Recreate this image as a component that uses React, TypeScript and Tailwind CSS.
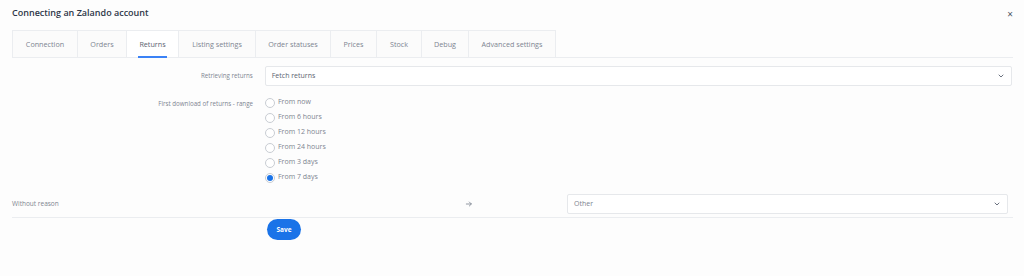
import React from 'react';

const tabs = [
  { label: 'Connection', w: 65 },
  { label: 'Orders', w: 49 },
  { label: 'Returns', w: 52, active: true },
  { label: 'Listing settings', w: 77 },
  { label: 'Order statuses', w: 75 },
  { label: 'Prices', w: 46 },
  { label: 'Stock', w: 45 },
  { label: 'Debug', w: 47 },
  { label: 'Advanced settings', w: 88 },
];

const ranges = ['From now', 'From 6 hours', 'From 12 hours', 'From 24 hours', 'From 3 days', 'From 7 days'];

const Chevron = () => (
  <svg width="8" height="8" viewBox="0 0 24 24" fill="none" stroke="#6b7280" strokeWidth={3} strokeLinecap="round" strokeLinejoin="round">
    <path d="M6 9l6 6 6-6" />
  </svg>
);

const App: React.FC = () => {
  return (
    <div className="w-[1024px] h-[276px] bg-[#fdfdfd] px-3 text-[#7d8591]" style={{ fontFamily: '"Open Sans", sans-serif' }}>
      {/* Header */}
      <div className="flex items-center justify-between h-[25px] pt-[1px]">
        <h1 className="text-[9px] font-semibold text-[#2d3748]">Connecting an Zalando account</h1>
        <span className="text-[10px] text-[#4b5563] mr-[-1px] mt-[2px]">×</span>
      </div>

      {/* Tabs */}
      <div className="mt-[5px] flex border-b border-[#ebedf0] w-[1001px]">
        {tabs.map((t) => (
          <div
            key={t.label}
            style={{ width: t.w }}
            className={`h-[27px] flex items-center justify-center border-l border-t border-[#ebedf0] last:border-r text-[7.2px] ${t.active ? 'bg-white text-[#5b6370]' : 'bg-[#fbfbfb] text-[#7d8591]'}`}
          >
            <span className="relative">
              {t.label}
              {t.active && <span className="absolute left-[-1px] right-[-1px] top-[17px] h-[2px] bg-[#3b82f6]" />}
            </span>
          </div>
        ))}
      </div>

      {/* Retrieving returns */}
      <div className="flex items-center mt-[8px]">
        <div className="w-[241px] text-right text-[6.2px]">Retrieving returns</div>
        <div className="ml-[12px] w-[748px] h-[20px] border border-[#e6e8eb] rounded-[2px] bg-white flex items-center justify-between px-[6px]">
          <span className="text-[7px] text-[#5b6370]">Fetch returns</span>
          <Chevron />
        </div>
      </div>

      {/* Range */}
      <div className="flex mt-[11px]">
        <div className="w-[241px] text-right text-[6.2px] pt-[2px]">First download of returns - range</div>
        <div className="ml-[12px] flex flex-col gap-[4px]">
          {ranges.map((r, i) => (
            <div key={r} className="flex items-center h-[11px]">
              <span className="w-[10px] h-[10px] rounded-full border border-[#c9cdd3] flex items-center justify-center bg-white">
                {i === 5 && <span className="w-[6px] h-[6px] rounded-full bg-[#1a73e8]" />}
              </span>
              <span className="ml-[3px] text-[7px] text-[#7d8591]">{r}</span>
            </div>
          ))}
        </div>
      </div>

      {/* Without reason */}
      <div className="flex items-center w-[1001px] border-b border-[#ebedf0] mt-[11px] pb-[3px]">
        <div className="w-[440px] text-[6.5px]">Without reason</div>
        <div className="w-[115px] pl-[13px] flex items-center">
          <svg width="8" height="8" viewBox="0 0 24 24" fill="none" stroke="#7d8591" strokeWidth={2.5} strokeLinecap="round" strokeLinejoin="round">
            <path d="M4 12h15M13 6l6 6-6 6" />
          </svg>
        </div>
        <div className="w-[441px] h-[20px] border border-[#e6e8eb] rounded-[2px] bg-white flex items-center justify-between px-[6px]">
          <span className="text-[7px] text-[#7d8591]">Other</span>
          <Chevron />
        </div>
      </div>

      {/* Save */}
      <div className="flex pl-[255px] pt-[1px]">
        <button className="w-[34px] h-[21px] rounded-full bg-[#1a73e8] text-white text-[6.5px] font-bold">Save</button>
      </div>
    </div>
  );
};

export default App;
